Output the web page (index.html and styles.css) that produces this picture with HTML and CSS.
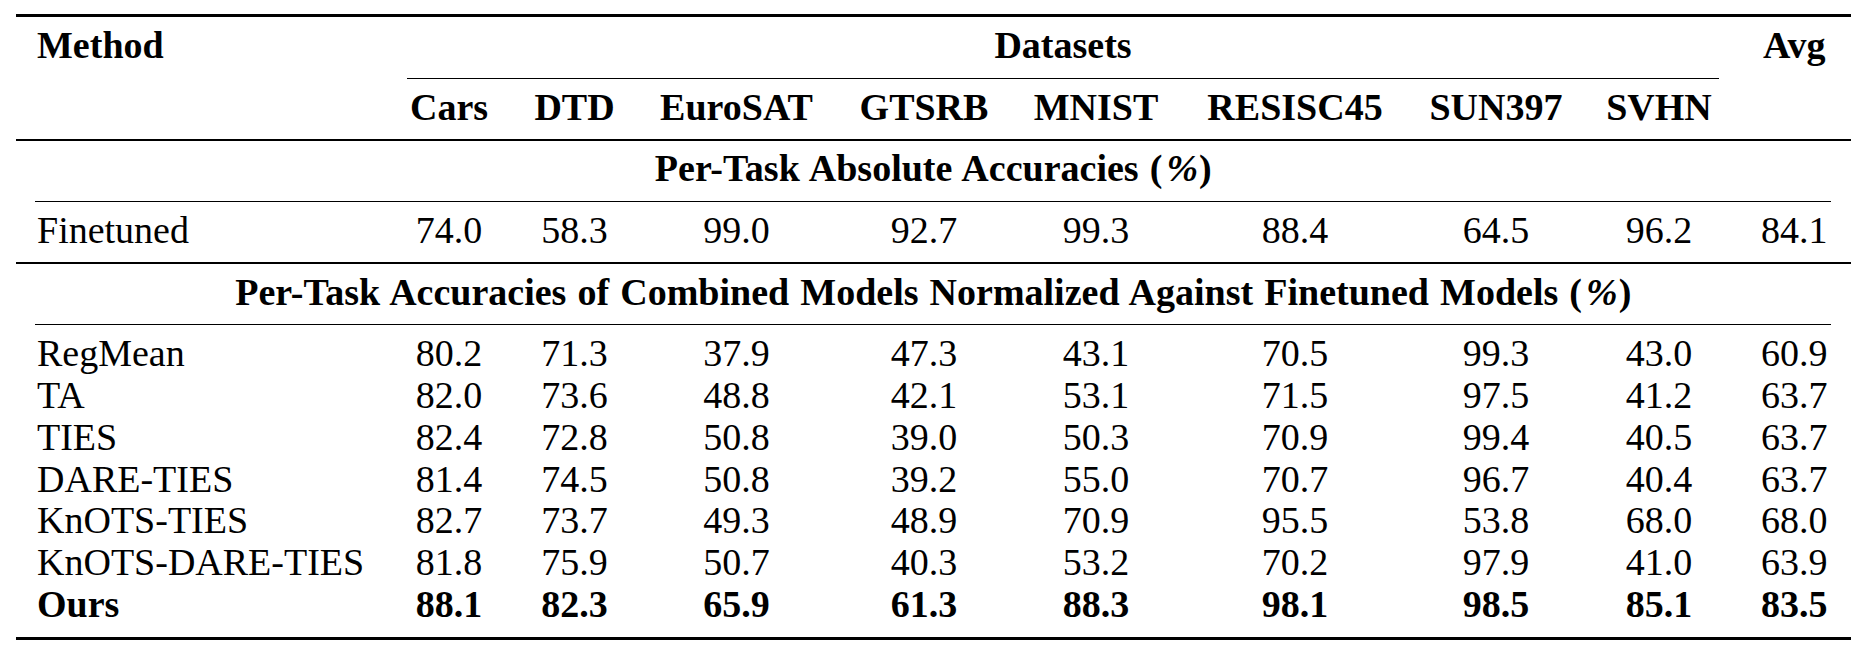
FILE: index.html
```html
<!DOCTYPE html>
<html lang="en">
<head>
<meta charset="utf-8">
<title>Per-Task Accuracies</title>
<link rel="stylesheet" href="styles.css">
</head>
<body>
<div class="wrap">
<table class="results">
  <colgroup>
    <col class="c-method">
    <col class="c-cars">
    <col class="c-dtd">
    <col class="c-euro">
    <col class="c-gtsrb">
    <col class="c-mnist">
    <col class="c-resisc">
    <col class="c-sun">
    <col class="c-svhn">
    <col class="c-avg">
  </colgroup>
  <tbody>
    <tr class="rule-row"><td colspan="10"><div class="rule rule-top"></div></td></tr>
    <tr class="b">
      <td class="m">Method</td>
      <td colspan="8">Datasets</td>
      <td>Avg</td>
    </tr>
    <tr class="rule-row"><td></td><td colspan="8"><div class="rule rule-cmid"></div></td><td></td></tr>
    <tr class="b">
      <td class="m"></td>
      <td>Cars</td><td>DTD</td><td>EuroSAT</td><td>GTSRB</td><td>MNIST</td><td>RESISC45</td><td>SUN397</td><td>SVHN</td>
      <td></td>
    </tr>
    <tr class="rule-row"><td colspan="10"><div class="rule rule-mid"></div></td></tr>
    <tr class="b sec"><td colspan="10">Per-Task Absolute Accuracies (<span class="pct">%</span>)</td></tr>
    <tr class="rule-row"><td colspan="10"><div class="rule rule-cmid rule-span"></div></td></tr>
    <tr>
      <td class="m">Finetuned</td>
      <td>74.0</td><td>58.3</td><td>99.0</td><td>92.7</td><td>99.3</td><td>88.4</td><td>64.5</td><td>96.2</td><td>84.1</td>
    </tr>
    <tr class="rule-row"><td colspan="10"><div class="rule rule-mid"></div></td></tr>
    <tr class="b sec"><td colspan="10">Per-Task Accuracies of Combined Models Normalized Against Finetuned Models (<span class="pct">%</span>)</td></tr>
    <tr class="rule-row"><td colspan="10"><div class="rule rule-cmid rule-span"></div></td></tr>
    <tr>
      <td class="m">RegMean</td>
      <td>80.2</td><td>71.3</td><td>37.9</td><td>47.3</td><td>43.1</td><td>70.5</td><td>99.3</td><td>43.0</td><td>60.9</td>
    </tr>
    <tr>
      <td class="m">TA</td>
      <td>82.0</td><td>73.6</td><td>48.8</td><td>42.1</td><td>53.1</td><td>71.5</td><td>97.5</td><td>41.2</td><td>63.7</td>
    </tr>
    <tr>
      <td class="m">TIES</td>
      <td>82.4</td><td>72.8</td><td>50.8</td><td>39.0</td><td>50.3</td><td>70.9</td><td>99.4</td><td>40.5</td><td>63.7</td>
    </tr>
    <tr>
      <td class="m">DARE-TIES</td>
      <td>81.4</td><td>74.5</td><td>50.8</td><td>39.2</td><td>55.0</td><td>70.7</td><td>96.7</td><td>40.4</td><td>63.7</td>
    </tr>
    <tr>
      <td class="m">KnOTS-TIES</td>
      <td>82.7</td><td>73.7</td><td>49.3</td><td>48.9</td><td>70.9</td><td>95.5</td><td>53.8</td><td>68.0</td><td>68.0</td>
    </tr>
    <tr>
      <td class="m">KnOTS-DARE-TIES</td>
      <td>81.8</td><td>75.9</td><td>50.7</td><td>40.3</td><td>53.2</td><td>70.2</td><td>97.9</td><td>41.0</td><td>63.9</td>
    </tr>
    <tr class="b">
      <td class="m">Ours</td>
      <td>88.1</td><td>82.3</td><td>65.9</td><td>61.3</td><td>88.3</td><td>98.1</td><td>98.5</td><td>85.1</td><td>83.5</td>
    </tr>
    <tr class="rule-row"><td colspan="10"><div class="rule rule-bottom"></div></td></tr>
  </tbody>
</table>
</div>
</body>
</html>
```

FILE: styles.css
```css
html, body {
  margin: 0;
  padding: 0;
  background: #ffffff;
}

.wrap {
  padding: 14px 0 0 16px;
}

.results {
  border-collapse: collapse;
  table-layout: fixed;
  width: 1834.5px;
  font-family: "Liberation Serif", "Times New Roman", serif;
  font-size: 38px;
  color: #000000;
}

.c-method { width: 372px; }
.c-cars { width: 122px; }
.c-dtd { width: 129px; }
.c-euro { width: 195px; }
.c-gtsrb { width: 180px; }
.c-mnist { width: 164px; }
.c-resisc { width: 234px; }
.c-sun { width: 168px; }
.c-svhn { width: 158px; }
.c-avg { width: 112.5px; }

.results td {
  padding: 0;
  height: 41.7px;
  line-height: 41.7px;
  text-align: center;
  white-space: nowrap;
}

.results td.m {
  text-align: left;
  padding-left: 21px;
}

.results tr.b td {
  font-weight: bold;
}

.results tr.sec td {
  word-spacing: 1.6px;
}

.pct {
  display: inline-block;
  margin: 0 1px 0 4px;
  font-style: italic;
}

.results tr.rule-row td {
  height: auto;
  line-height: 0;
  font-size: 0;
}

.rule {
  background: #000000;
}

.rule-top {
  height: 3px;
  margin: 0 0 8px 0;
}

.rule-mid {
  height: 2px;
  margin: 10.3px 0 7.7px 0;
}

.rule-cmid {
  height: 1px;
  margin: 10.8px 18.7px 8.2px 18.7px;
}

.rule-span {
  margin-left: 19px;
  margin-right: 19.5px;
}

.rule-bottom {
  height: 3px;
  margin: 11.8px 0 0 0;
}
```
